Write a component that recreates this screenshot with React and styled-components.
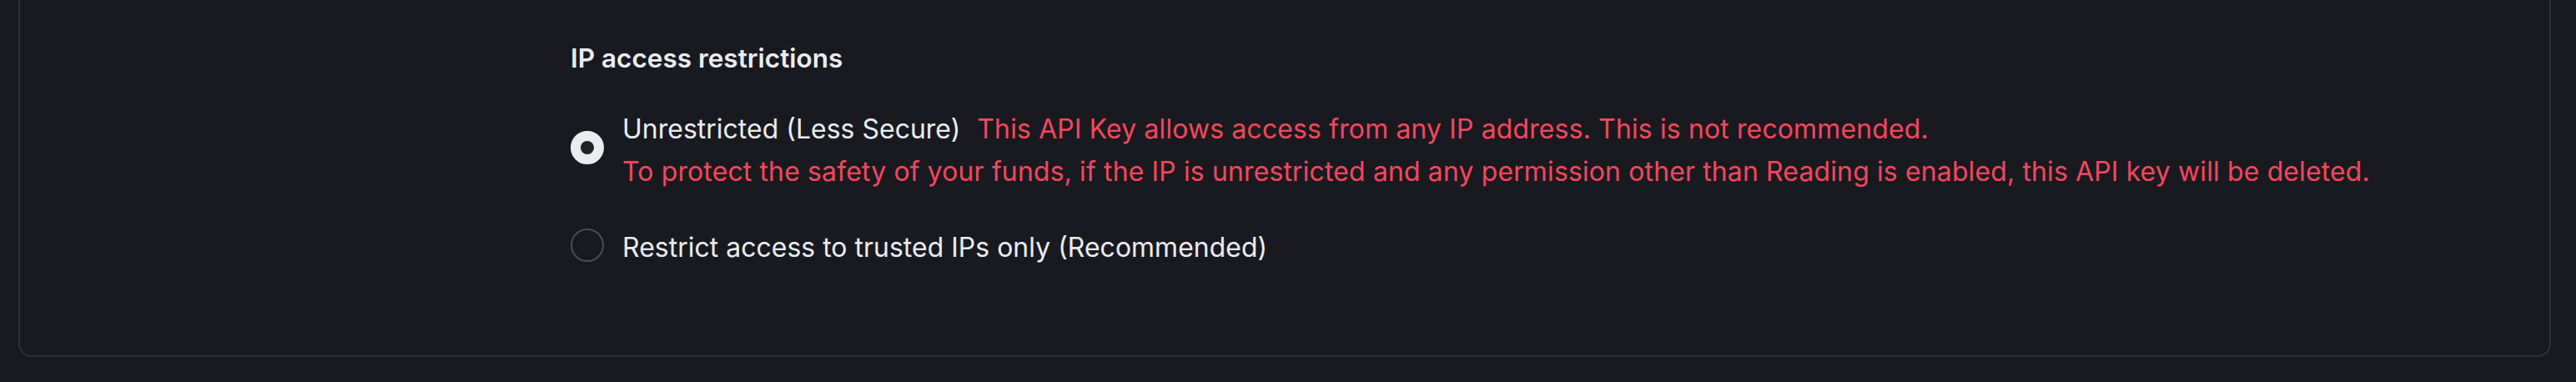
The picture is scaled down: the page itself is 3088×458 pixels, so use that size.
import React from 'react';
import { styled, createGlobalStyle } from 'styled-components';

const GlobalStyle = createGlobalStyle`
  html, body {
    margin: 0;
    padding: 0;
    background: #181a20;
  }

  body {
    font-family: Inter, "Noto Sans", Arial, sans-serif;
    -webkit-font-smoothing: antialiased;
  }
`;

function Radio({ checked }) {
  return <RadioMark $checked={checked} role="radio" aria-checked={checked} />;
}

export default function App() {
  return (
    <>
      <GlobalStyle />
      <Page>
        <Card>
          <Section>
            <Title>IP access restrictions</Title>
            <Options>
              <Option>
                <Radio checked />
                <OptionText>
                  <Line>
                    <Label>Unrestricted (Less Secure)</Label>
                    <Warning $inline>
                      This API Key allows access from any IP address. This is not recommended.
                    </Warning>
                  </Line>
                  <Line>
                    <Warning>
                      To protect the safety of your funds, if the IP is unrestricted and any
                      permission other than Reading is enabled, this API key will be deleted.
                    </Warning>
                  </Line>
                </OptionText>
              </Option>
              <Option>
                <Radio />
                <OptionText>
                  <Line>
                    <Label>Restrict access to trusted IPs only (Recommended)</Label>
                  </Line>
                </OptionText>
              </Option>
            </Options>
          </Section>
        </Card>
      </Page>
    </>
  );
}

const Page = styled.div`
  width: 3088px;
  height: 458px;
  padding: 0 30px 0 22px;
  box-sizing: border-box;
  background: #181a20;
  overflow: hidden;
`;

const Card = styled.div`
  height: 428px;
  box-sizing: border-box;
  border: 2px solid #2b3139;
  border-top: none;
  border-radius: 0 0 16px 16px;
  padding: 48px 0 0 660px;
`;

const Section = styled.div`
  display: flex;
  flex-direction: column;
`;

const Title = styled.div`
  color: #eaecef;
  font-size: 31.5px;
  font-weight: 600;
  line-height: 44px;
`;

const Options = styled.div`
  display: flex;
  flex-direction: column;
  gap: 40px;
  margin-top: 37px;
`;

const Option = styled.div`
  display: flex;
  align-items: center;
  gap: 22px;
  cursor: pointer;
`;

const RadioMark = styled.span`
  position: relative;
  flex: none;
  width: 40px;
  height: 40px;
  margin-bottom: 6px;
  box-sizing: border-box;
  border-radius: 50%;
  border: 2px solid ${(p) => (p.$checked ? '#eaecef' : '#474d57')};
  background: ${(p) => (p.$checked ? '#eaecef' : 'transparent')};

  &::after {
    content: '';
    display: ${(p) => (p.$checked ? 'block' : 'none')};
    position: absolute;
    top: 50%;
    left: 50%;
    width: 16px;
    height: 16px;
    border-radius: 50%;
    background: #1e2329;
    transform: translate(-50%, -50%);
  }
`;

const OptionText = styled.div`
  display: flex;
  flex-direction: column;
`;

const Line = styled.div`
  display: flex;
  align-items: baseline;
  line-height: 51px;
  font-size: 32px;
  white-space: nowrap;
`;

const Label = styled.span`
  color: #eaecef;
  font-weight: 400;
`;

const Warning = styled.span`
  color: #f6465d;
  font-weight: 400;
  letter-spacing: 0.12px;
  margin-left: ${(p) => (p.$inline ? '20px' : '0')};
`;
